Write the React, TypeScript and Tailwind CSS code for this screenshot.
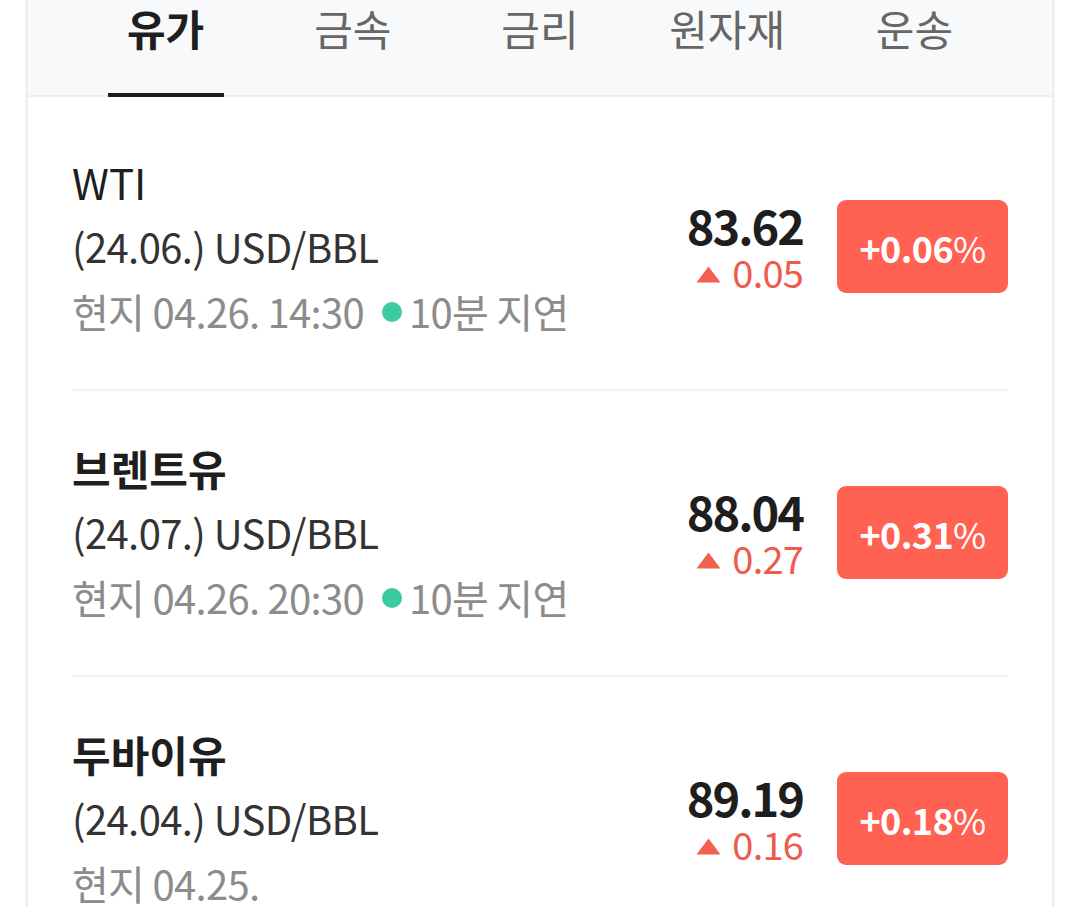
import React from 'react';

const FONT = '"Noto Sans CJK KR", "Noto Sans", sans-serif';

interface Quote {
  name: string;
  latinName?: boolean;
  contract: string;
  time: string;
  delayed: boolean;
  price: string;
  change: string;
  rate: string;
}

const tabs = ['유가', '금속', '금리', '원자재', '운송'];

const quotes: Quote[] = [
  { name: 'WTI', latinName: true, contract: '(24.06.) USD/BBL', time: '현지 04.26. 14:30', delayed: true, price: '83.62', change: '0.05', rate: '0.06' },
  { name: '브렌트유', contract: '(24.07.) USD/BBL', time: '현지 04.26. 20:30', delayed: true, price: '88.04', change: '0.27', rate: '0.31' },
  { name: '두바이유', contract: '(24.04.) USD/BBL', time: '현지 04.25.', delayed: false, price: '89.19', change: '0.16', rate: '0.18' },
];

const QuoteRow: React.FC<{ q: Quote; first?: boolean }> = ({ q, first }) => (
  <div
    className={`flex items-center justify-between border-b-2 border-[#f2f3f5] pb-[45px] ${
      first ? 'pt-[52px]' : 'pt-[44px]'
    }`}
  >
    <div className="flex flex-col">
      <div className={`text-[42px] leading-[65px] text-[#1e1e1e] ${q.latinName ? 'font-normal' : 'font-bold'}`}>
        {q.name}
      </div>
      <div className="text-[40px] leading-[65px] tracking-[-0.6px] text-[#333333]">{q.contract}</div>
      <div className="flex items-center text-[40px] leading-[65px] tracking-[-0.7px] text-[#8c8c8c]">
        <span>{q.time}</span>
        {q.delayed && (
          <>
            <span className="ml-[18px] mr-[7px] h-[20px] w-[20px] rounded-full bg-[#3ccaa2]" />
            <span>10분 지연</span>
          </>
        )}
      </div>
    </div>
    <div className="flex items-center gap-[34px]">
      <div className="flex flex-col items-end">
        <div className="text-[47px] font-bold leading-[50px] tracking-[-2px] text-[#1e1e1e]">{q.price}</div>
        <div className="flex items-center gap-[11px] text-[38px] leading-[44px] tracking-[-0.8px] text-[#ee5a4b]">
          <svg width="25" height="17" viewBox="0 0 25 17" className="mt-[6px]">
            <path d="M12.5 0.5 L24.5 16.5 L0.5 16.5 Z" fill="#f2604f" />
          </svg>
          <span>{q.change}</span>
        </div>
      </div>
      <div className="flex h-[93px] w-[171px] items-center justify-center rounded-[9px] bg-[#ff6152] text-[36px] tracking-[-0.6px] text-white">
        <span className="font-bold">+{q.rate}</span>
        <span className="font-normal">%</span>
      </div>
    </div>
  </div>
);

export default function App() {
  return (
    <div className="h-[906px] overflow-hidden bg-white px-[26px]" style={{ fontFamily: FONT }}>
      <div className="min-h-full border-x-2 border-[#ececec] shadow-[0_0_4px_rgba(0,0,0,0.06)]">
        <div className="grid h-[97px] grid-cols-5 border-b-2 border-[#eceef1] bg-[#f8f9fb] px-[44px]">
          {tabs.map((t, i) => (
            <div key={t} className="relative flex justify-center">
              <span
                className={`text-[42px] leading-[56px] ${
                  i === 0 ? 'font-bold text-[#1e1e1e]' : 'font-normal text-[#666666]'
                }`}
              >
                {t}
              </span>
              {i === 0 && (
                <span className="absolute -bottom-[2px] left-1/2 h-[4px] w-[116px] -translate-x-1/2 bg-[#1e1e1e]" />
              )}
            </div>
          ))}
        </div>
        <div className="px-[44px]">
          {quotes.map((q, i) => (
            <QuoteRow key={q.name} q={q} first={i === 0} />
          ))}
        </div>
      </div>
    </div>
  );
}
